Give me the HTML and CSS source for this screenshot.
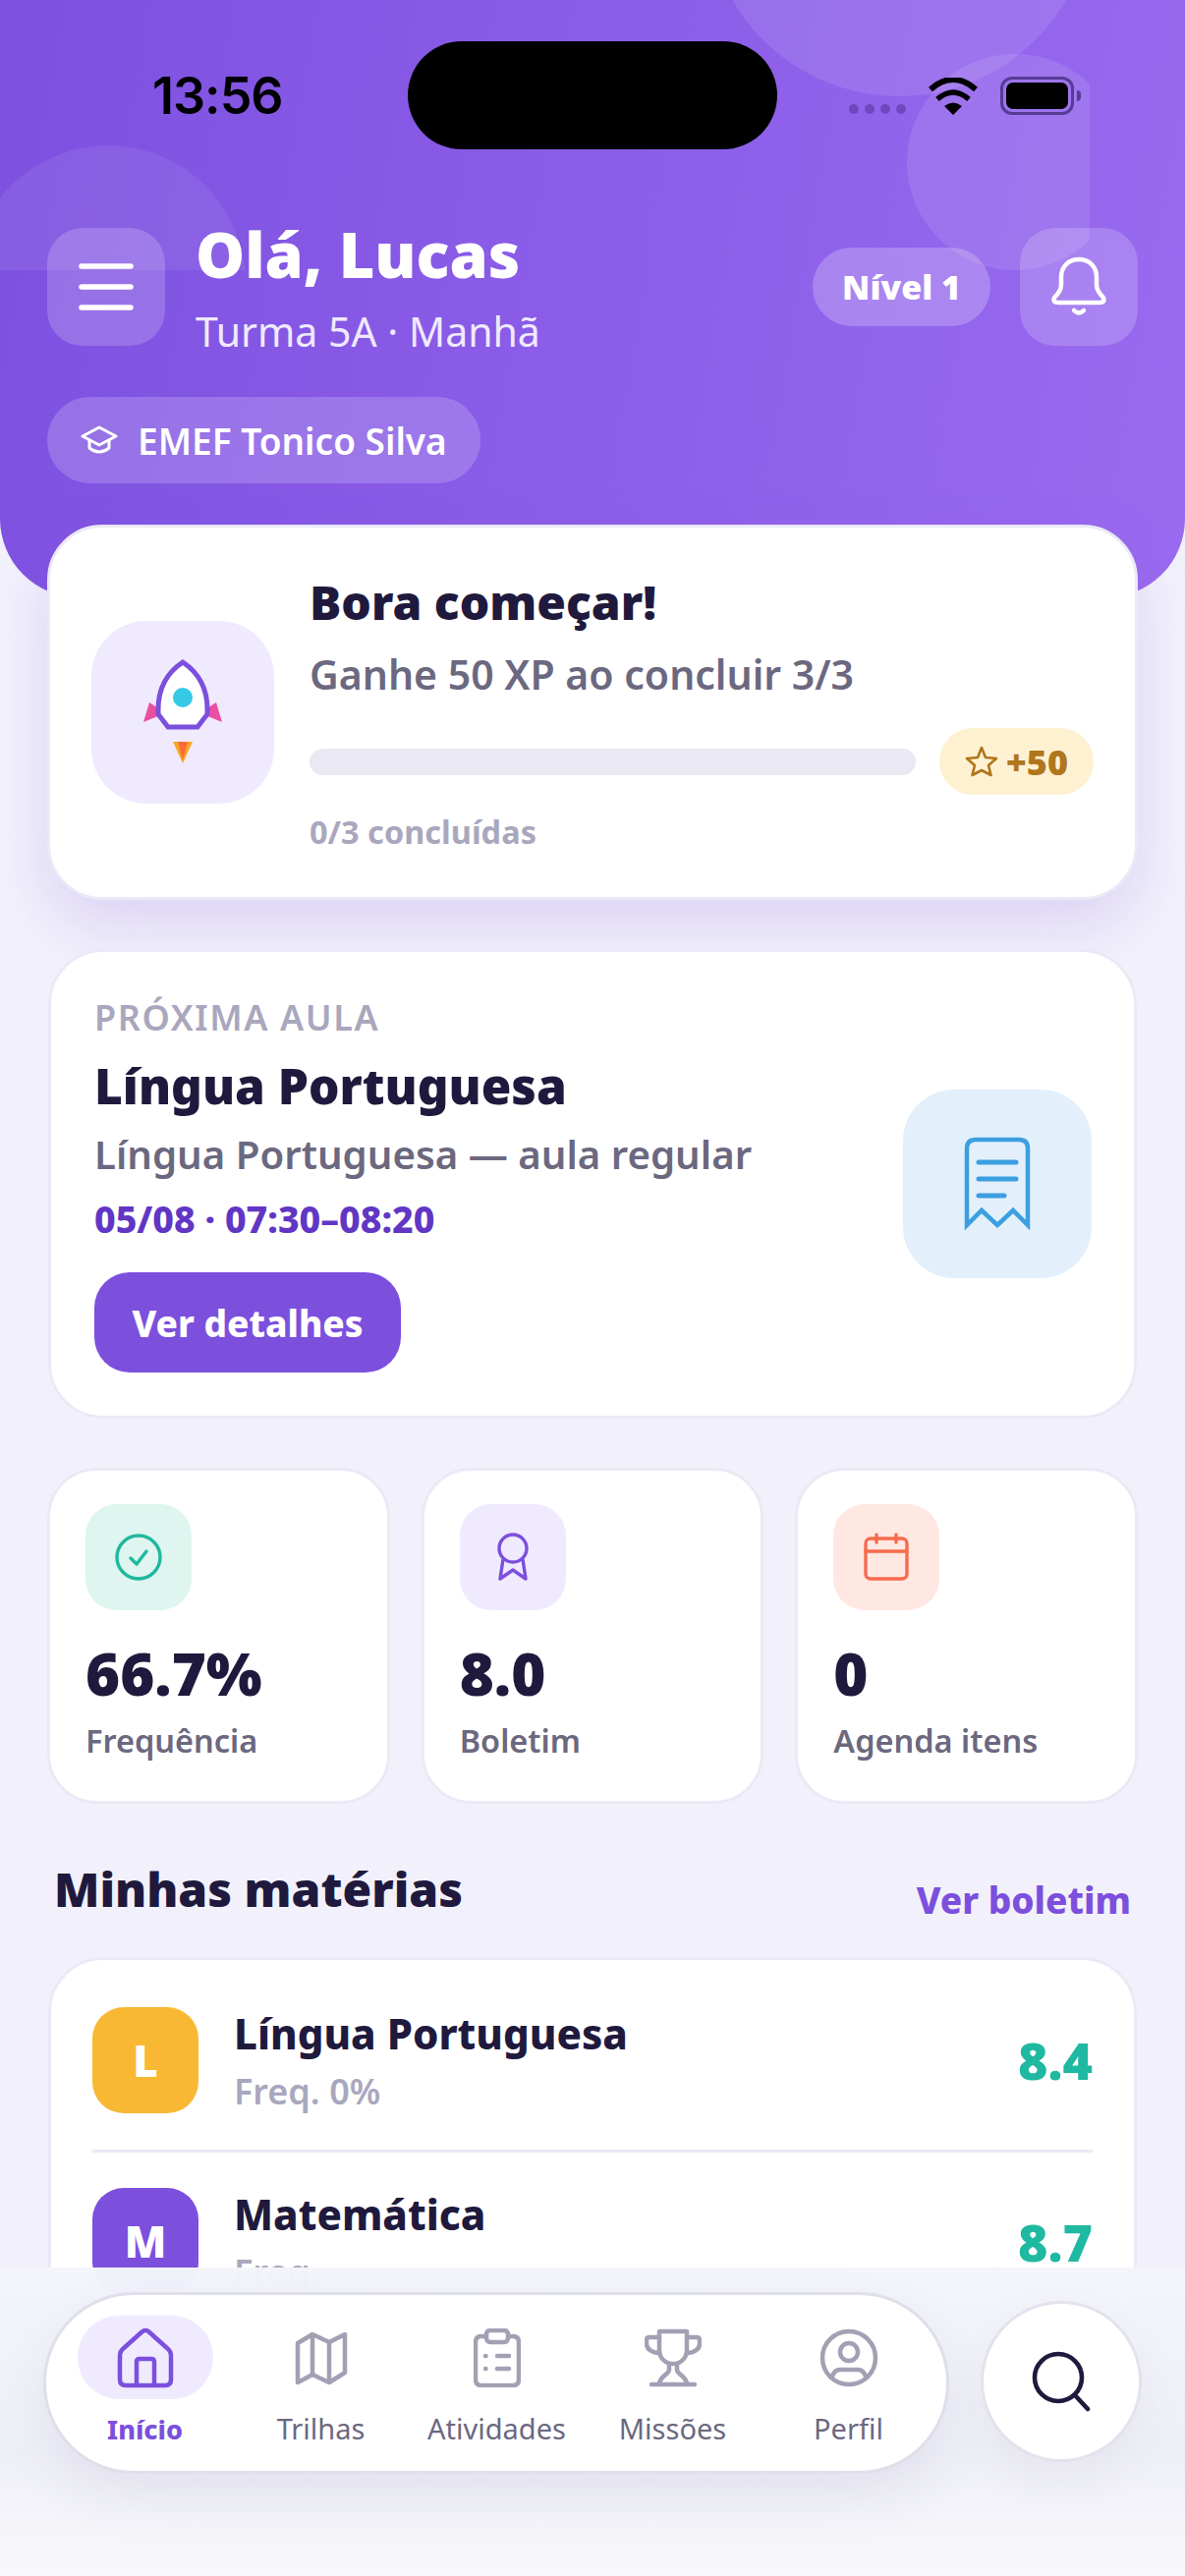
FILE: index.html
```html
<!DOCTYPE html>
<html lang="pt-BR">
<head>
  <meta charset="UTF-8">
  <meta name="viewport" content="width=device-width, initial-scale=1.0">
  <title>Início</title>
  <link rel="stylesheet" href="styles.css">
</head>
<body>
  <div class="screen">
    <header class="hero">
      <div class="hero-decor">
        <span class="blob blob-top"></span>
        <span class="blob blob-right"></span>
        <span class="blob blob-left"></span>
      </div>
      <div class="island"></div>

      <div class="status-bar">
        <span class="clock">13:56</span>
        <div class="status-icons">
          <div class="signal"><i></i><i></i><i></i><i></i></div>
          <svg class="wifi" width="50" height="38" viewBox="0 0 50 38">
            <path d="M25 38L16 29Q25 22 34 29Z" fill="#000"/>
            <path d="M9 22Q25 8 41 22" fill="none" stroke="#000" stroke-width="5.5"/>
            <path d="M2 12Q25 -8 48 12" fill="none" stroke="#000" stroke-width="6"/>
          </svg>
          <div class="battery"><div class="battery-fill"></div></div>
        </div>
      </div>

      <div class="hero-top">
        <button class="glass-btn">
          <svg width="56" height="50" viewBox="0 0 56 50" fill="none" stroke="#fff" stroke-width="5.5" stroke-linecap="round">
            <path d="M3 4H53M3 25H53M3 46H53"/>
          </svg>
        </button>
        <div class="hello">
          <h1>Olá, Lucas</h1>
          <p>Turma 5A · Manhã</p>
        </div>
        <span class="level-pill">Nível 1</span>
        <button class="glass-btn">
          <svg width="58" height="64" viewBox="0 0 58 64" fill="none" stroke="#fff" stroke-width="4.5" stroke-linecap="round" stroke-linejoin="round">
            <path d="M29 4C18 4 11 12 11 22V30C11 35 8 39 4 43Q2 48 8 48H50Q56 48 54 43C50 39 47 35 47 30V22C47 12 40 4 29 4Z"/>
            <path d="M24 56Q29 61 34 56"/>
          </svg>
        </button>
      </div>

      <div class="school-pill">
        <svg width="38" height="32" viewBox="0 0 38 32" fill="none" stroke="#fff" stroke-width="3" stroke-linejoin="round" stroke-linecap="round">
          <path d="M19 3L36 12L19 21L2 12Z"/>
          <path d="M9 16V24Q19 32 29 24V16"/>
        </svg>
        <span>EMEF Tonico Silva</span>
      </div>
    </header>

    <main class="content">
      <section class="card quest">
        <div class="tile tile-quest">
          <svg width="186" height="186" viewBox="0 0 186 186">
            <path d="M53 103L59 83L70 90L70 96Z" fill="#ea4f9f"/>
            <path d="M133 103L127 83L116 90L116 96Z" fill="#ea4f9f"/>
            <path d="M93 42C78 52 68 66 68 90L68 95L78 108H108L118 95L118 90C118 66 108 52 93 42Z" fill="#fff" stroke="#7c4fdd" stroke-width="5"/>
            <circle cx="93" cy="78" r="10" fill="#35c9e6"/>
            <path d="M83 123H103L93 145Z" fill="#f9a826"/>
            <path d="M88 123H98L93 142Z" fill="#f96b3a"/>
          </svg>
        </div>
        <div class="quest-body">
          <h2>Bora começar!</h2>
          <p class="quest-sub">Ganhe 50 XP ao concluir 3/3</p>
          <div class="quest-progress">
            <div class="bar"></div>
            <span class="xp-pill">
              <svg width="34" height="34" viewBox="0 0 34 34" fill="none" stroke="#b0761c" stroke-width="2.6" stroke-linejoin="round">
                <path d="M17 3L21 13L32 14L24 21L26.5 31L17 26L7.5 31L10 21L2 14L13 13Z"/>
              </svg>
              +50
            </span>
          </div>
          <p class="quest-done">0/3 concluídas</p>
        </div>
      </section>

      <section class="card next-class">
        <div class="next-info">
          <p class="eyebrow">PRÓXIMA AULA</p>
          <h2>Língua Portuguesa</h2>
          <p class="next-sub">Língua Portuguesa — aula regular</p>
          <p class="next-time">05/08 · 07:30–08:20</p>
          <button class="primary-btn">Ver detalhes</button>
        </div>
        <div class="tile tile-class">
          <svg width="68" height="96" viewBox="0 0 68 96" fill="none" stroke="#3b9fe0" stroke-width="4.5" stroke-linejoin="miter" stroke-linecap="round">
            <path d="M3 90V12Q3 3 12 3H56Q65 3 65 12V90L50 75L34 90L18 75Z"/>
            <path d="M15 26H53M15 43H53M15 60H41" stroke-width="5"/>
          </svg>
        </div>
      </section>

      <section class="stats">
        <div class="card stat">
          <div class="tile stat-tile tile-green">
            <svg width="50" height="50" viewBox="0 0 50 50" fill="none" stroke="#1fb8a0" stroke-width="3.4" stroke-linecap="round" stroke-linejoin="round">
              <circle cx="25" cy="25" r="22"/>
              <path d="M17 26L23 32L33 19"/>
            </svg>
          </div>
          <p class="stat-value">66.7%</p>
          <p class="stat-label">Frequência</p>
        </div>
        <div class="card stat">
          <div class="tile stat-tile tile-purple">
            <svg width="36" height="50" viewBox="0 0 36 50" fill="none" stroke="#7c4fdd" stroke-width="3.4" stroke-linejoin="round">
              <circle cx="18" cy="16" r="14"/>
              <path d="M8 27L5 47L18 38L31 47L28 27"/>
            </svg>
          </div>
          <p class="stat-value">8.0</p>
          <p class="stat-label">Boletim</p>
        </div>
        <div class="card stat">
          <div class="tile stat-tile tile-orange">
            <svg width="48" height="50" viewBox="0 0 48 50" fill="none" stroke="#f76b4d" stroke-width="3.4" stroke-linecap="round" stroke-linejoin="round">
              <rect x="3" y="6" width="42" height="41" rx="5"/>
              <path d="M3 19H45M14 2V10M34 2V10"/>
            </svg>
          </div>
          <p class="stat-value">0</p>
          <p class="stat-label">Agenda itens</p>
        </div>
      </section>

      <div class="section-head">
        <h3>Minhas matérias</h3>
        <a class="section-link">Ver boletim</a>
      </div>

      <section class="card subjects">
        <div class="subject">
          <div class="badge badge-yellow">L</div>
          <div class="subject-info">
            <p class="subject-name">Língua Portuguesa</p>
            <p class="subject-freq">Freq. 0%</p>
          </div>
          <span class="subject-grade">8.4</span>
        </div>
        <div class="subject">
          <div class="badge badge-purple">M</div>
          <div class="subject-info">
            <p class="subject-name">Matemática</p>
            <p class="subject-freq">Freq.</p>
          </div>
          <span class="subject-grade">8.7</span>
        </div>
      </section>
    </main>

    <div class="dock">
      <nav class="tabbar">
        <a class="tab active">
          <span class="tab-icon">
            <svg width="60" height="62" viewBox="0 0 60 62" fill="none" stroke="currentColor" stroke-width="4.5" stroke-linejoin="round">
              <path d="M27 4Q30 2 33 4L52 21Q56 24 56 29V53Q56 59 50 59H10Q4 59 4 53V29Q4 24 8 21Z"/>
              <path d="M21 59V35Q21 32 24 32H36Q39 32 39 35V59"/>
            </svg>
          </span>
          <span>Início</span>
        </a>
        <a class="tab">
          <span class="tab-icon">
            <svg width="54" height="58" viewBox="0 0 54 58" fill="none" stroke="currentColor" stroke-width="4.5" stroke-linejoin="round">
              <path d="M3 14L18 5L35 13L51 5V44L35 54L18 46L3 54Z"/>
              <path d="M18 5V46M35 13V54"/>
            </svg>
          </span>
          <span>Trilhas</span>
        </a>
        <a class="tab">
          <span class="tab-icon">
            <svg width="48" height="60" viewBox="0 0 48 60" fill="none" stroke="currentColor" stroke-width="4.5" stroke-linecap="round" stroke-linejoin="round">
              <path d="M13 8H8Q2 8 2 14V52Q2 58 8 58H40Q46 58 46 52V14Q46 8 40 8H35"/>
              <rect x="13" y="2" width="22" height="12" rx="4"/>
              <path d="M24 28H36M24 41H36M12 28H12.5M12 41H12.5"/>
            </svg>
          </span>
          <span>Atividades</span>
        </a>
        <a class="tab">
          <span class="tab-icon">
            <svg width="58" height="60" viewBox="0 0 58 60" fill="none" stroke="currentColor" stroke-width="4.5" stroke-linecap="round" stroke-linejoin="round">
              <path d="M15 3H43V22C43 30 37 36 29 36C21 36 15 30 15 22Z"/>
              <path d="M15 9H5Q2 9 2 12V16C2 21 8 25 15 25M43 9H53Q56 9 56 12V16C56 21 50 25 43 25"/>
              <path d="M25 36V42C25 47 16 48 15 56M33 36V42C33 47 42 48 43 56M7 57H51"/>
            </svg>
          </span>
          <span>Missões</span>
        </a>
        <a class="tab">
          <span class="tab-icon">
            <svg width="60" height="60" viewBox="0 0 60 60" fill="none" stroke="currentColor" stroke-width="4.5" stroke-linecap="round" stroke-linejoin="round">
              <circle cx="30" cy="30" r="27"/>
              <circle cx="30" cy="24" r="9"/>
              <path d="M12 50L15 45Q17 42 21 42H39Q43 42 45 45L48 50"/>
            </svg>
          </span>
          <span>Perfil</span>
        </a>
      </nav>
      <button class="search-btn">
        <svg width="60" height="62" viewBox="0 0 60 62" fill="none" stroke="#1f1a3d" stroke-width="4.6" stroke-linecap="round">
          <circle cx="27" cy="27" r="24"/>
          <path d="M44 45L57 59"/>
        </svg>
      </button>
    </div>
  </div>
</body>
</html>
```

FILE: styles.css
```css
* {
  box-sizing: border-box;
}

body {
  margin: 0;
  font-family: "Noto Sans", Lato, sans-serif;
  color: #1f1a3d;
  background-color: #f2f1fb;
}

p, h1, h2, h3 {
  margin: 0;
}

button {
  border: none;
  padding: 0;
  font-family: inherit;
}

.screen {
  position: relative;
  width: 1206px;
  height: 2622px;
  overflow: hidden;
}

/* header */
.hero {
  position: relative;
  height: 608px;
  padding: 0 48px;
  background: linear-gradient(100deg, #7d50e0 0%, #9a6bf0 100%);
  border-radius: 0 0 80px 80px;
  color: #fff;
}

.hero-decor {
  position: absolute;
  left: 0;
  top: 0;
  width: 1109px;
  height: 275px;
  overflow: hidden;
}

.blob {
  position: absolute;
  border-radius: 50%;
  background-color: rgba(255, 255, 255, 0.1);
}

.blob-top {
  left: 719px;
  top: -294px;
  width: 392px;
  height: 392px;
}

.blob-right {
  left: 923px;
  top: 55px;
  width: 220px;
  height: 220px;
}

.blob-left {
  left: -30px;
  top: 148px;
  width: 280px;
  height: 280px;
  background-color: rgba(255, 255, 255, 0.07);
}

.island {
  position: absolute;
  left: 415px;
  top: 42px;
  width: 376px;
  height: 110px;
  border-radius: 55px;
  background-color: #000;
}

.status-bar {
  position: relative;
  display: flex;
  justify-content: space-between;
  align-items: center;
  height: 232px;
  padding: 0 65px 38px 107px;
  color: #000;
}

.clock {
  font-family: Inter, sans-serif;
  font-size: 52px;
  font-weight: 600;
  letter-spacing: -1px;
}

.status-icons {
  display: flex;
  align-items: flex-end;
  gap: 23px;
}

.signal {
  display: flex;
  gap: 6px;
  margin-bottom: 1px;
}

.signal i {
  width: 10px;
  height: 10px;
  border-radius: 50%;
  background-color: rgba(40, 20, 90, 0.32);
}

.battery {
  position: relative;
  width: 75px;
  height: 39px;
  padding: 3px;
  border: 3px solid rgba(40, 20, 90, 0.6);
  border-radius: 12px;
}

.battery::after {
  content: "";
  position: absolute;
  right: -10px;
  top: 11px;
  width: 4px;
  height: 11px;
  border-radius: 0 4px 4px 0;
  background-color: rgba(40, 20, 90, 0.6);
}

.battery-fill {
  height: 100%;
  border-radius: 7px;
  background-color: #000;
}

.hero-top {
  position: relative;
  display: flex;
  align-items: center;
  height: 120px;
}

.glass-btn {
  display: flex;
  justify-content: center;
  align-items: center;
  flex-shrink: 0;
  width: 120px;
  height: 120px;
  border-radius: 36px;
  background-color: rgba(255, 255, 255, 0.18);
}

.hello {
  flex: 1;
  margin: 8px 0 0 31px;
}

.hello h1 {
  margin-top: -8px;
  font-size: 63px;
  line-height: 76px;
  font-weight: 900;
}

.hello p {
  margin-top: 13px;
  font-size: 41px;
  line-height: 54px;
  color: #f0e9ff;
}

.level-pill {
  display: flex;
  align-items: center;
  height: 80px;
  margin-right: 30px;
  padding: 0 30px;
  border-radius: 40px;
  background-color: rgba(255, 255, 255, 0.22);
  font-size: 34px;
  font-weight: 900;
}

.school-pill {
  position: relative;
  display: inline-flex;
  align-items: center;
  gap: 20px;
  height: 88px;
  margin-top: 52px;
  padding: 0 34px;
  border-radius: 44px;
  background-color: rgba(255, 255, 255, 0.18);
  font-size: 37px;
  font-weight: 600;
}

/* main column */
.content {
  position: relative;
  display: flex;
  flex-direction: column;
  margin-top: -74px;
  padding: 0 49px;
}

.card {
  background-color: #fff;
  border: 3px solid #ebe9f6;
  border-radius: 56px;
}

.tile {
  display: flex;
  justify-content: center;
  align-items: center;
  flex-shrink: 0;
}

.quest {
  display: flex;
  align-items: center;
  height: 382px;
  margin: 0 -1px;
  padding: 0 42px;
  box-shadow: 0 26px 60px rgba(124, 79, 221, 0.18);
}

.tile-quest {
  width: 186px;
  height: 186px;
  border-radius: 56px;
  background-color: #f0eaff;
}

.quest-body {
  flex: 1;
  margin-left: 36px;
  padding-top: 6px;
}

.quest-body h2 {
  margin-top: -4px;
  font-size: 48px;
  line-height: 60px;
  font-weight: 900;
}

.quest-sub {
  margin-top: 18px;
  font-size: 41px;
  line-height: 50px;
  font-weight: 600;
  color: #6b6880;
}

.quest-progress {
  display: flex;
  align-items: center;
  gap: 24px;
  margin-top: 30px;
}

.bar {
  flex: 1;
  height: 27px;
  border-radius: 14px;
  background-color: #e9e8f3;
}

.xp-pill {
  display: flex;
  align-items: center;
  gap: 8px;
  height: 68px;
  padding: 0 26px;
  border-radius: 34px;
  background-color: #fdf1d2;
  color: #b0761c;
  font-size: 36px;
  font-weight: 900;
}

.quest-done {
  margin-top: 16px;
  font-size: 32.5px;
  line-height: 44px;
  font-weight: 700;
  color: #a9a7bd;
}

.next-class {
  display: flex;
  justify-content: space-between;
  align-items: center;
  height: 478px;
  margin-top: 50px;
  padding: 0 43px 0 44px;
}

.next-info {
  padding-top: 3px;
}

.eyebrow {
  margin-top: -2px;
  font-size: 36px;
  line-height: 44px;
  font-weight: 600;
  letter-spacing: 1.6px;
  color: #a9a7bd;
}

.next-info h2 {
  margin-top: 15px;
  font-size: 49.5px;
  line-height: 64px;
  font-weight: 900;
}

.next-sub {
  margin-top: 13px;
  font-size: 40.2px;
  line-height: 50px;
  font-weight: 600;
  color: #6b6880;
}

.next-time {
  margin-top: 19px;
  font-size: 37.5px;
  line-height: 44px;
  font-weight: 800;
  color: #6236c4;
}

.primary-btn {
  display: block;
  width: 312px;
  height: 102px;
  margin-top: 32px;
  border-radius: 36px;
  background-color: #7c4fdd;
  color: #fff;
  font-size: 37px;
  font-weight: 800;
}

.tile-class {
  width: 192px;
  height: 192px;
  border-radius: 52px;
  background-color: #e3f0fc;
}

.stats {
  display: grid;
  grid-template-columns: repeat(3, 1fr);
  gap: 32px;
  margin: 50px -1px 0;
}

.stat {
  height: 342px;
  padding: 34px 36px;
  border-radius: 50px;
}

.stat-tile {
  width: 108px;
  height: 108px;
  border-radius: 32px;
}

.tile-green {
  background-color: #dff5ef;
}

.tile-purple {
  background-color: #f0eaff;
}

.tile-orange {
  background-color: #ffe8e1;
}

.stat-value {
  margin-top: 28px;
  font-size: 60px;
  line-height: 72px;
  font-weight: 900;
}

.stat-label {
  margin-top: 12px;
  font-size: 32.5px;
  line-height: 42px;
  font-weight: 600;
  color: #6b6880;
}

.section-head {
  display: flex;
  justify-content: space-between;
  align-items: flex-end;
  margin-top: 56px;
  padding: 0 6px;
}

.section-head h3 {
  font-size: 48px;
  line-height: 62px;
  font-weight: 900;
}

.section-link {
  margin-bottom: -3px;
  font-size: 37px;
  line-height: 46px;
  font-weight: 800;
  color: #7c4fdd;
}

.subjects {
  margin-top: 38px;
  padding: 10px 42px 0;
}

.subject {
  display: flex;
  align-items: center;
  height: 183px;
}

.subject + .subject {
  border-top: 3px solid #ebe9f6;
}

.badge {
  display: flex;
  justify-content: center;
  align-items: center;
  width: 108px;
  height: 108px;
  border-radius: 32px;
  color: #fff;
  font-size: 44px;
  font-weight: 900;
}

.badge-yellow {
  background-color: #f8b833;
}

.badge-purple {
  background-color: #7c4fdd;
}

.subject-info {
  flex: 1;
  margin-left: 36px;
}

.subject-name {
  margin-top: -1px;
  font-size: 42px;
  line-height: 56px;
  font-weight: 800;
}

.subject-freq {
  margin-top: 9px;
  font-size: 36px;
  line-height: 44px;
  font-weight: 600;
  color: #a9a7bd;
}

.subject-grade {
  font-size: 52px;
  font-weight: 900;
  color: #1fb8a0;
}

/* bottom tab bar, floats over the list */
.dock {
  position: absolute;
  left: 0;
  right: 0;
  bottom: 0;
  display: flex;
  align-items: flex-start;
  height: 314px;
  padding: 25px 44px 0;
  background: linear-gradient(180deg, rgba(243, 245, 251, 0.98) 0%, #eff0f7 60%, #f8f8fc 100%);
}

.tabbar {
  display: grid;
  flex-shrink: 0;
  grid-template-columns: repeat(5, 179px);
  width: 922px;
  height: 185px;
  padding-left: 11px;
  background-color: #fff;
  border: 3px solid #dfdeea;
  border-radius: 92px;
  box-shadow: 0 24px 56px rgba(60, 50, 110, 0.08);
}

.tab {
  display: flex;
  flex-direction: column;
  align-items: center;
  padding-top: 21px;
  font-size: 29px;
  color: #6b6880;
}

.tab-icon {
  display: flex;
  justify-content: center;
  align-items: center;
  width: 138px;
  height: 85px;
  margin-bottom: 10px;
  border-radius: 42px;
  color: #a3a0b4;
}

.tab.active {
  color: #7c4fdd;
  font-size: 27px;
  font-weight: 800;
}

.tab.active .tab-icon {
  background-color: #f0eaff;
  color: #7c4fdd;
  margin-bottom: 12px;
}

.search-btn {
  display: flex;
  justify-content: center;
  align-items: center;
  flex-shrink: 0;
  width: 164px;
  height: 164px;
  margin: 9px 0 0 32px;
  border: 3px solid #e3e2ed;
  border-radius: 50%;
  background-color: #fff;
  box-shadow: 0 20px 50px rgba(60, 50, 110, 0.06);
}
```
